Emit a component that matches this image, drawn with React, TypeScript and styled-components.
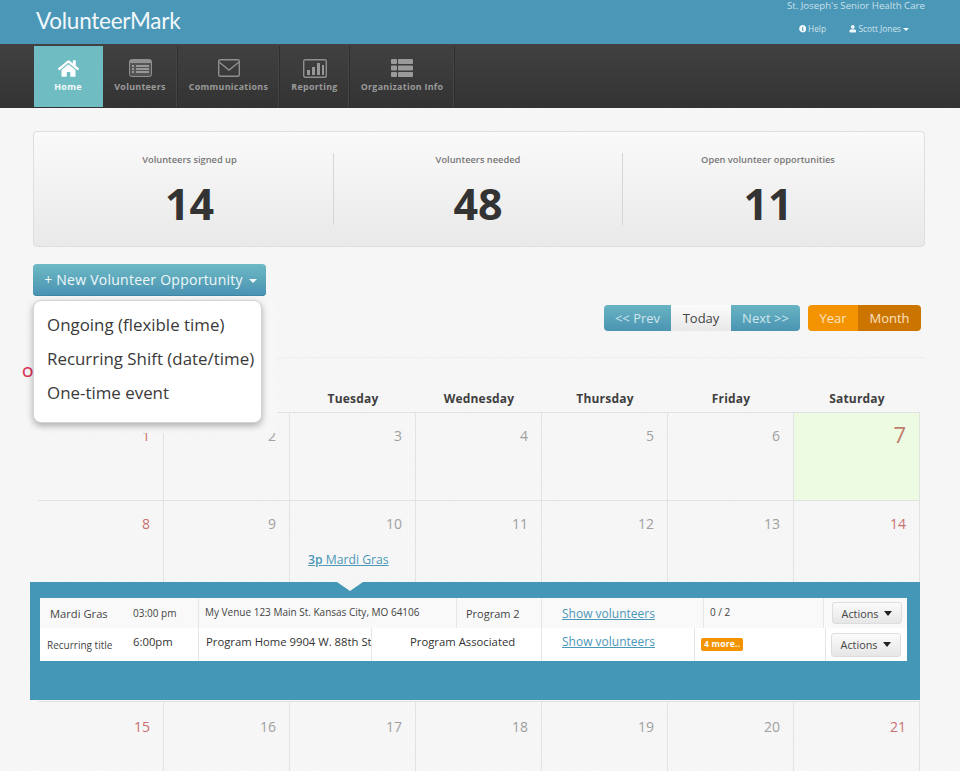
import React from "react";
import styled, { createGlobalStyle } from "styled-components";
import { FaHome, FaInfoCircle, FaUser } from "react-icons/fa";

const Global = createGlobalStyle`
  html, body { margin: 0; padding: 0; height: 771px; overflow: hidden; }
  body {
    font-family: "Open Sans", "Liberation Sans", sans-serif;
    color: #333;
    background-color: #f5f5f5;
    background-image: repeating-linear-gradient(45deg, rgba(255,255,255,.35) 0 1px, transparent 1px 3px);
  }
  * { box-sizing: border-box; }
`;

const TopBar = styled.header`
  height: 44px;
  background: #4b97b7;
  display: flex;
  justify-content: space-between;
  padding: 0 35px 0 36px;
`;
const Logo = styled.div`
  font-family: Lato, "Open Sans", sans-serif;
  font-size: 22.5px;
  line-height: 24px;
  color: #f2f8fa;
  padding-top: 9px;
  letter-spacing: -0.25px;
`;
const TopRight = styled.div`
  display: flex;
  flex-direction: column;
  align-items: flex-end;
`;
const OrgName = styled.div`
  font-size: 9.7px;
  line-height: 11px;
  color: #c9e0ea;
`;
const TopLinks = styled.div`
  display: flex;
  gap: 23px;
  padding: 12px 16px 0 0;
`;
const TopLink = styled.span`
  font-size: 8.3px;
  line-height: 12px;
  color: #cfe4ed;
  display: inline-flex;
  align-items: center;
  gap: 2px;
  svg { font-size: 7.5px; color: #f0f7fa; }
`;
const TinyCaret = styled.i`
  width: 0;
  height: 0;
  border: 3px solid transparent;
  border-top: 3px solid #f0f7fa;
  border-bottom: 0;
`;

const NavBar = styled.nav`
  height: 64px;
  background: linear-gradient(#414141, #333);
  display: flex;
  padding: 2px 0 0 34px;
`;
const NavItem = styled.a<{ $w: number; $active?: boolean }>`
  width: ${(p) => p.$w}px;
  height: 61px;
  border-right: 1px solid ${(p) => (p.$active ? "#6fbdc3" : "#2f2f2f")};
  box-shadow: ${(p) => (p.$active ? "none" : "inset -1px 0 0 #444")};
  background: ${(p) => (p.$active ? "#6fbdc3" : "transparent")};
  color: ${(p) => (p.$active ? "#f5fbfb" : "#9b9b9b")};
  display: flex;
  flex-direction: column;
  align-items: center;
  font-size: 8.9px;
  font-weight: 700;
  letter-spacing: 0.3px;
  line-height: 12px;
`;
const NavIcon = styled.div`
  height: 22px;
  margin: 11px 0 2px;
  display: flex;
  align-items: center;
  justify-content: center;
`;

const Main = styled.main`
  padding: 23px 35px 0 33px;
`;
const Stats = styled.section`
  height: 116px;
  border: 1px solid #dedede;
  border-radius: 4px;
  background: linear-gradient(#fafafa, #e9e9e9);
  display: grid;
  grid-template-columns: 287px 289px 1fr;
  padding: 21px 11px 0 12px;
`;
const Stat = styled.div<{ $divider?: boolean }>`
  height: 72px;
  text-align: center;
  border-left: ${(p) => (p.$divider ? "1px solid #d6d6d6" : "none")};
`;
const StatLabel = styled.div`
  font-size: 9.3px;
  font-weight: 600;
  line-height: 13px;
  color: #777;
`;
const StatValue = styled.div`
  font-size: 43px;
  font-weight: 700;
  line-height: 50px;
  margin-top: 13px;
  color: #333;
`;

const ActionArea = styled.div`
  position: relative;
  margin-top: 17px;
  height: 32px;
`;
const PrimaryButton = styled.button`
  width: 233px;
  height: 32px;
  border: 0;
  border-radius: 4px;
  background: linear-gradient(#6db9c4, #4a92b2);
  box-shadow: inset 0 -1px 0 #3f86a5;
  color: #eef8fa;
  font: 14px "Open Sans", sans-serif;
  letter-spacing: 0.25px;
  display: flex;
  align-items: center;
  justify-content: center;
  gap: 6px;
  padding: 0 0 2px 2px;
`;
const WhiteCaret = styled.i`
  width: 0;
  height: 0;
  margin-top: 3px;
  border: 4px solid transparent;
  border-top: 4px solid #eef8fa;
  border-bottom: 0;
`;
const Haze = styled.div`
  position: absolute;
  z-index: 5;
  top: 36px;
  left: 0;
  width: 244px;
  height: 133px;
  background: #f7f7f7;
`;
const Dropdown = styled.ul`
  list-style: none;
  margin: 0;
  width: 229px;
  height: 123px;
  padding: 7px 0 0 13px;
  background: #fff;
  border: 1px solid #d4d4d4;
  border-radius: 8px;
  box-shadow: 0 3px 7px rgba(0, 0, 0, 0.3);
`;
const DropdownItem = styled.li`
  font-size: 16.9px;
  line-height: 34px;
  white-space: nowrap;
  color: #3a3a3a;
`;

const ToolRow = styled.div`
  display: flex;
  justify-content: flex-end;
  gap: 8px;
  margin-top: 9px;
  padding-right: 4px;
`;
const ButtonGroup = styled.div`
  display: flex;
  border-radius: 4px;
  overflow: hidden;
`;
const ToolButton = styled.span<{ $w: number; $kind: "blue" | "white" | "orange" | "dark" }>`
  width: ${(p) => p.$w}px;
  height: 26px;
  font-size: 13px;
  line-height: 26px;
  text-align: center;
  color: ${(p) => (p.$kind === "white" ? "#444" : p.$kind === "blue" ? "#cfe6ec" : "#fbe3c0")};
  background: ${(p) =>
    p.$kind === "blue"
      ? "linear-gradient(#68b4c2,#4b94b3)"
      : p.$kind === "white"
        ? "linear-gradient(#fbfbfb,#e8e8e8)"
        : p.$kind === "orange"
          ? "#f49300"
          : "#cc7400"};
`;

const TitleRow = styled.div`
  height: 33px;
  margin: 26px 0 0 5px;
  border-top: 1px solid #eee;
`;
const MonthTitle = styled.h2`
  margin: 0 0 0 -16px;
  font-size: 14.5px;
  line-height: 28px;
  font-weight: 600;
  color: #d9355b;
`;

const Calendar = styled.section`
  margin: 0 5px 0 5px;
`;
const WeekGrid = styled.div<{ $h: number }>`
  display: grid;
  grid-template-columns: repeat(7, 1fr);
  height: ${(p) => p.$h}px;
`;
const DayName = styled.div`
  text-align: center;
  font-size: 12px;
  font-weight: 700;
  line-height: 16px;
  padding-top: 1px;
  color: #3f3f3f;
  letter-spacing: 0.2px;
`;
const Day = styled.div<{ $today?: boolean; $pad: number }>`
  border-top: 1px solid #e2e2e2;
  border-right: 1px solid #e2e2e2;
  padding: ${(p) => p.$pad}px 13px 0 18px;
  background: ${(p) => (p.$today ? "#eefbe3" : "transparent")};
`;
const DayNumber = styled.div<{ $weekend?: boolean; $today?: boolean }>`
  text-align: right;
  font-size: ${(p) => (p.$today ? 22 : 14)}px;
  line-height: 18px;
  color: ${(p) => (p.$today ? "#bd7d6c" : p.$weekend ? "#c8716f" : "#a0a0a0")};
`;
const EventLink = styled.a`
  display: block;
  margin-top: 19px;
  white-space: nowrap;
  font-size: 12.2px;
  line-height: 16px;
  color: #4b97b7;
  text-decoration: underline;
  b { font-weight: 600; }
`;

const Panel = styled.section`
  position: relative;
  height: 118px;
  margin: 0 0 1px -8px;
  background: #4497b6;
  padding: 16px 13px 0 10px;
`;
const Notch = styled.i`
  position: absolute;
  top: 0;
  left: 307px;
  width: 0;
  height: 0;
  border-left: 13px solid transparent;
  border-right: 13px solid transparent;
  border-top: 9px solid #f5f5f5;
`;
const TableRow = styled.div<{ $cols: string; $h: number; $alt?: boolean }>`
  display: grid;
  grid-template-columns: ${(p) => p.$cols};
  height: ${(p) => p.$h}px;
  background: ${(p) => (p.$alt ? "#f9f9f9" : "#fff")};
`;
const Cell = styled.div<{ $pad?: number; $line?: boolean; $lift?: number }>`
  display: flex;
  align-items: center;
  padding-left: ${(p) => p.$pad ?? 0}px;
  padding-bottom: ${(p) => p.$lift ?? 0}px;
  border-left: ${(p) => (p.$line ? "1px solid #e6e6e6" : "none")};
  white-space: nowrap;
  overflow: hidden;
`;
const CellText = styled.span<{ $size: number; $w?: number; $color?: string; $weight?: number; $lift?: number }>`
  font-size: ${(p) => p.$size}px;
  width: ${(p) => (p.$w ? `${p.$w}px` : "auto")};
  flex: none;
  margin-bottom: ${(p) => p.$lift ?? 0}px;
  color: ${(p) => p.$color ?? "#444"};
  font-weight: ${(p) => p.$weight ?? 400};
`;
const ShowLink = styled.a`
  font-size: 12px;
  color: #4b97b7;
  text-decoration: underline;
`;
const MoreBadge = styled.span`
  background: #f49300;
  color: #fff;
  border-radius: 2px;
  font-size: 8.6px;
  font-weight: 700;
  line-height: 13px;
  padding: 0 3px;
  letter-spacing: 0.2px;
`;
const ActionsButton = styled.span<{ $h: number }>`
  width: 70px;
  height: ${(p) => p.$h}px;
  border: 1px solid #ddd;
  border-radius: 3px;
  background: linear-gradient(#fbfbfb, #e6e6e6);
  font-size: 10.8px;
  color: #444;
  display: flex;
  align-items: center;
  justify-content: center;
  gap: 6px;
`;
const DarkCaret = styled.i`
  width: 0;
  height: 0;
  border: 4.5px solid transparent;
  border-top: 5px solid #222;
  border-bottom: 0;
`;

const VolunteersIcon = () => (
  <svg width="23" height="18" viewBox="0 0 23 18">
    <rect x="0.5" y="0.5" width="22" height="17" rx="2" fill="#555" stroke="#8f8f8f" />
    <rect x="1" y="1" width="21" height="3" fill="#909090" />
    <path d="M3 7h2M3 10h2M3 13h2M7 7h13M7 10h13M7 13h13" stroke="#adadad" strokeWidth="1.4" />
  </svg>
);
const MailIcon = () => (
  <svg width="22" height="18" viewBox="0 0 22 18" fill="none" stroke="#8f8f8f" strokeWidth="1.4">
    <rect x="0.7" y="0.7" width="20.6" height="16.6" rx="1.5" />
    <path d="M1 3l10 8 10-8" />
  </svg>
);
const ReportIcon = () => (
  <svg width="24" height="19" viewBox="0 0 24 19">
    <rect x="0.7" y="0.7" width="22.6" height="17.6" rx="1.5" fill="none" stroke="#8f8f8f" strokeWidth="1.4" />
    <path d="M4 11h3v5H4zM9 8h3v8H9zM14 4h3v12h-3zM19 6h2v10h-2z" fill="#979797" />
  </svg>
);
const OrgIcon = () => (
  <svg width="22" height="18" viewBox="0 0 22 18" fill="#9a9a9a">
    <rect width="6" height="5" rx="1" />
    <rect x="7" width="15" height="5" rx="1" />
    <rect y="6.5" width="6" height="5" rx="1" />
    <rect x="7" y="6.5" width="15" height="5" rx="1" />
    <rect y="13" width="6" height="5" rx="1" />
    <rect x="7" y="13" width="15" height="5" rx="1" />
  </svg>
);

const navItems = [
  { label: "Home", w: 69, icon: <FaHome size={21} color="#fff" />, active: true },
  { label: "Volunteers", w: 75, icon: <VolunteersIcon /> },
  { label: "Communications", w: 102, icon: <MailIcon /> },
  { label: "Reporting", w: 70, icon: <ReportIcon /> },
  { label: "Organization Info", w: 105, icon: <OrgIcon /> },
];
const stats = [
  { label: "Volunteers signed up", value: 14 },
  { label: "Volunteers needed", value: 48 },
  { label: "Open volunteer opportunities", value: 11 },
];
const dayNames = ["", "", "Tuesday", "Wednesday", "Thursday", "Friday", "Saturday"];
const weekend = (i: number) => i % 7 === 0 || i % 7 === 6;
const week = (start: number) => Array.from({ length: 7 }, (_, i) => start + i);

export default function App() {
  return (
    <>
      <Global />
      <TopBar>
        <Logo>VolunteerMark</Logo>
        <TopRight>
          <OrgName>St. Joseph's Senior Health Care</OrgName>
          <TopLinks>
            <TopLink><FaInfoCircle />Help</TopLink>
            <TopLink><FaUser />Scott Jones<TinyCaret /></TopLink>
          </TopLinks>
        </TopRight>
      </TopBar>
      <NavBar>
        {navItems.map((n) => (
          <NavItem key={n.label} $w={n.w} $active={n.active}>
            <NavIcon>{n.icon}</NavIcon>
            {n.label}
          </NavItem>
        ))}
      </NavBar>
      <Main>
        <Stats>
          {stats.map((s, i) => (
            <Stat key={s.label} $divider={i > 0}>
              <StatLabel>{s.label}</StatLabel>
              <StatValue>{s.value}</StatValue>
            </Stat>
          ))}
        </Stats>
        <ActionArea>
          <PrimaryButton>+ New Volunteer Opportunity<WhiteCaret /></PrimaryButton>
          <Haze>
            <Dropdown>
              <DropdownItem>Ongoing (flexible time)</DropdownItem>
              <DropdownItem>Recurring Shift (date/time)</DropdownItem>
              <DropdownItem>One-time event</DropdownItem>
            </Dropdown>
          </Haze>
        </ActionArea>
        <ToolRow>
          <ButtonGroup>
            <ToolButton $w={67} $kind="blue">&lt;&lt; Prev</ToolButton>
            <ToolButton $w={60} $kind="white">Today</ToolButton>
            <ToolButton $w={69} $kind="blue">Next &gt;&gt;</ToolButton>
          </ButtonGroup>
          <ButtonGroup>
            <ToolButton $w={50} $kind="orange">Year</ToolButton>
            <ToolButton $w={63} $kind="dark">Month</ToolButton>
          </ButtonGroup>
        </ToolRow>
        <TitleRow>
          <MonthTitle>O</MonthTitle>
        </TitleRow>
        <Calendar>
          <WeekGrid $h={22}>
            {dayNames.map((d, i) => <DayName key={i}>{d}</DayName>)}
          </WeekGrid>
          <WeekGrid $h={88}>
            {week(1).map((n, i) => (
              <Day key={n} $pad={n === 7 ? 12 : 14} $today={n === 7}>
                <DayNumber $weekend={weekend(i)} $today={n === 7}>{n}</DayNumber>
              </Day>
            ))}
          </WeekGrid>
          <WeekGrid $h={82}>
            {week(8).map((n, i) => (
              <Day key={n} $pad={14}>
                <DayNumber $weekend={weekend(i)}>{n}</DayNumber>
                {n === 10 && <EventLink><b>3p</b> Mardi Gras</EventLink>}
              </Day>
            ))}
          </WeekGrid>
          <Panel>
            <Notch />
            <TableRow $alt $h={30} $cols="158px 258px 85px 162px 120px 1fr">
              <Cell $pad={10}>
                <CellText $size={11.2} $w={83} $weight={500}>Mardi Gras</CellText>
                <CellText $size={10}>03:00 pm</CellText>
              </Cell>
              <Cell $pad={6} $line $lift={2}><CellText $size={10}>My Venue 123 Main St. Kansas City, MO 64106</CellText></Cell>
              <Cell $pad={9} $line><CellText $size={11}>Program 2</CellText></Cell>
              <Cell $pad={20} $line><ShowLink>Show volunteers</ShowLink></Cell>
              <Cell $pad={6} $line $lift={2}><CellText $size={10}>0 / 2</CellText></Cell>
              <Cell $pad={8} $line><ActionsButton $h={22}>Actions<DarkCaret /></ActionsButton></Cell>
            </TableRow>
            <TableRow $h={33} $cols="158px 173px 170px 153px 131px 1fr">
              <Cell $pad={7}>
                <CellText $size={10} $w={86}>Recurring title</CellText>
                <CellText $size={11.3} $color="#333" $lift={7}>6:00pm</CellText>
              </Cell>
              <Cell $pad={7} $line $lift={7}><CellText $size={11.3} $color="#333">Program Home 9904 W. 88th St</CellText></Cell>
              <Cell $pad={38} $line $lift={7}><CellText $size={11.3} $color="#333">Program Associated</CellText></Cell>
              <Cell $pad={20} $line $lift={6}><ShowLink>Show volunteers</ShowLink></Cell>
              <Cell $pad={6} $line><MoreBadge>4 more..</MoreBadge></Cell>
              <Cell $pad={5} $line><ActionsButton $h={24}>Actions<DarkCaret /></ActionsButton></Cell>
            </TableRow>
          </Panel>
          <WeekGrid $h={89}>
            {week(15).map((n, i) => (
              <Day key={n} $pad={16}>
                <DayNumber $weekend={weekend(i)}>{n}</DayNumber>
              </Day>
            ))}
          </WeekGrid>
        </Calendar>
      </Main>
    </>
  );
}
